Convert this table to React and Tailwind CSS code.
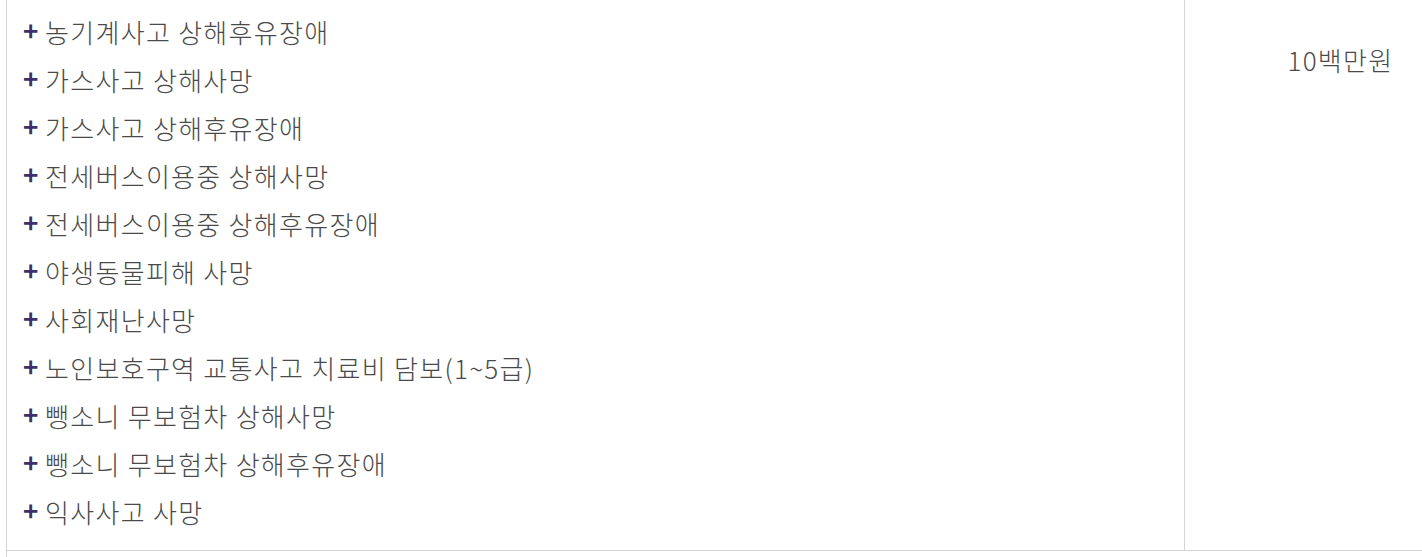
export default function App() {
  const items = [
    "농기계사고 상해후유장애",
    "가스사고 상해사망",
    "가스사고 상해후유장애",
    "전세버스이용중 상해사망",
    "전세버스이용중 상해후유장애",
    "야생동물피해 사망",
    "사회재난사망",
    "노인보호구역 교통사고 치료비 담보(1~5급)",
    "뺑소니 무보험차 상해사망",
    "뺑소니 무보험차 상해후유장애",
    "익사사고 사망",
  ];
  return (
    <div className="w-[1422px] h-[557px] overflow-hidden bg-white" style={{ fontFamily: '"Noto Sans CJK KR", "Noto Sans", sans-serif' }}>
      <div className="ml-[6px] w-[1490px] flex border-b border-l border-[#d4d4d4]">
        <div className="w-[1178px] border-r border-[#d4d4d4] pt-[7px] pb-[15px] pl-[16px]">
          {items.map((t) => (
            <div key={t} className="h-[48px] flex items-center text-[26px] text-[#4a4a4a] font-light tracking-[1.3px]">
              <span className="text-[#3d2f6b] font-bold text-[26px] w-[22px] leading-none mb-[3px] tracking-normal">+</span>
              <span>{t}</span>
            </div>
          ))}
        </div>
        <div className="flex-1 flex justify-center pt-[35px] text-[26px] text-[#4a4a4a] font-light tracking-[1.3px]">
          <div className="h-[48px] flex items-center">10백만원</div>
        </div>
      </div>
      <div className="ml-[6px] h-[10px] border-l border-[#d4d4d4]" />
    </div>
  );
}
